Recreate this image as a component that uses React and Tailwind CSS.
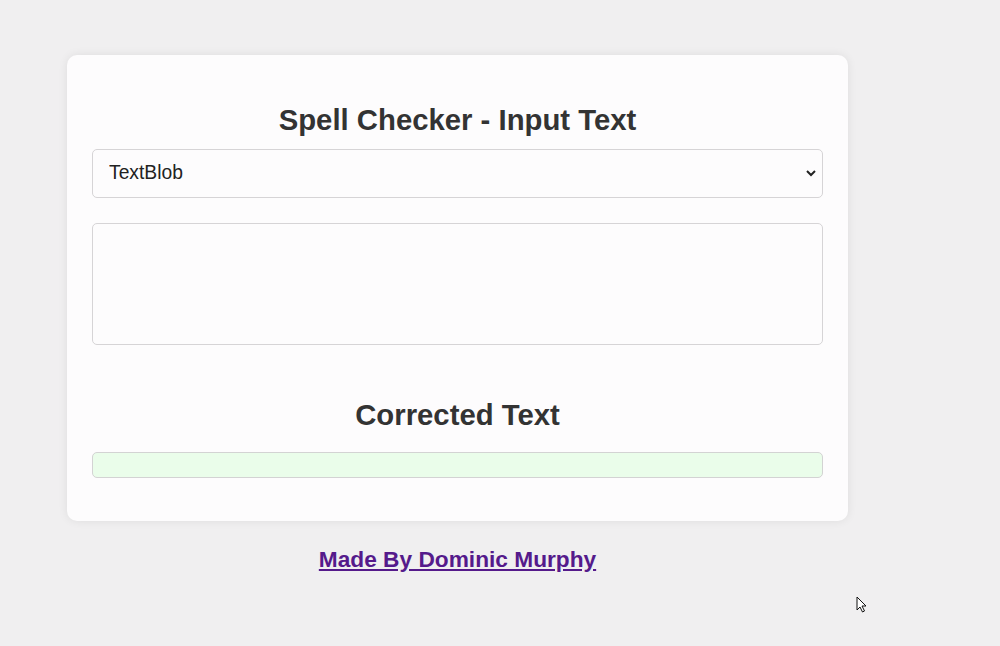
import React, { useState } from 'react'

const App = () => {
  const [model, setModel] = useState('TextBlob')
  const [text, setText] = useState('')

  return (
    <div className="relative min-h-[646px] w-full bg-[#f0eff0] pt-[55px]" style={{ fontFamily: '"Liberation Sans", Arial, sans-serif' }}>
      <div className="ml-[67px] w-[781px]">
        {/* Card */}
        <div className="rounded-[10px] bg-[#fdfcfd] px-[25px] pt-[47px] pb-[43px] shadow-[0_0_10px_rgba(0,0,0,0.08)]">
          <h2 className="text-center text-[29.3px] font-bold leading-[36px] text-[#333]">
            Spell Checker - Input Text
          </h2>

          <div className="relative mt-[11px]">
            <select
              value={model}
              onChange={e => setModel(e.target.value)}
              className="h-[49px] w-full appearance-none rounded-[5px] border border-[#d6d4d6] bg-[#fdfcfd] pl-[16px] text-[19.3px] text-[#222]"
            >
              <option>TextBlob</option>
              <option>PySpellChecker</option>
            </select>
            <svg className="pointer-events-none absolute right-[6px] top-[19px]" width="12" height="10" viewBox="0 0 12 10">
              <path d="M2 3 L6 7 L10 3" fill="none" stroke="#222" strokeWidth="2" />
            </svg>
          </div>

          <textarea
            value={text}
            onChange={e => setText(e.target.value)}
            className="mt-[25px] block h-[122px] w-full resize-none rounded-[5px] border border-[#d6d4d6] bg-[#fdfcfd] p-[10px] text-[18px]"
          />

          <h2 className="mt-[52px] text-center text-[29.3px] font-bold leading-[36px] text-[#333]">
            Corrected Text
          </h2>

          <div className="mt-[19px] h-[26px] w-full rounded-[5px] border border-[#d3d3d3] bg-[#eafdea]"></div>
        </div>

        {/* Footer link */}
        <div className="mt-[21px] text-center">
          <a href="#" className="text-[22.7px] font-bold text-[#551a8b] underline">
            Made By Dominic Murphy
          </a>
        </div>
      </div>

      {/* mouse pointer */}
      <svg className="pointer-events-none absolute left-[856px] top-[596px]" width="12" height="18" viewBox="0 0 12 18">
        <path d="M1 1 L1 14 L4 11 L6.5 16 L8.5 15 L6 10 L10 10 Z" fill="#fff" stroke="#111" strokeWidth="1" strokeLinejoin="round" />
      </svg>
    </div>
  )
}

export default App
